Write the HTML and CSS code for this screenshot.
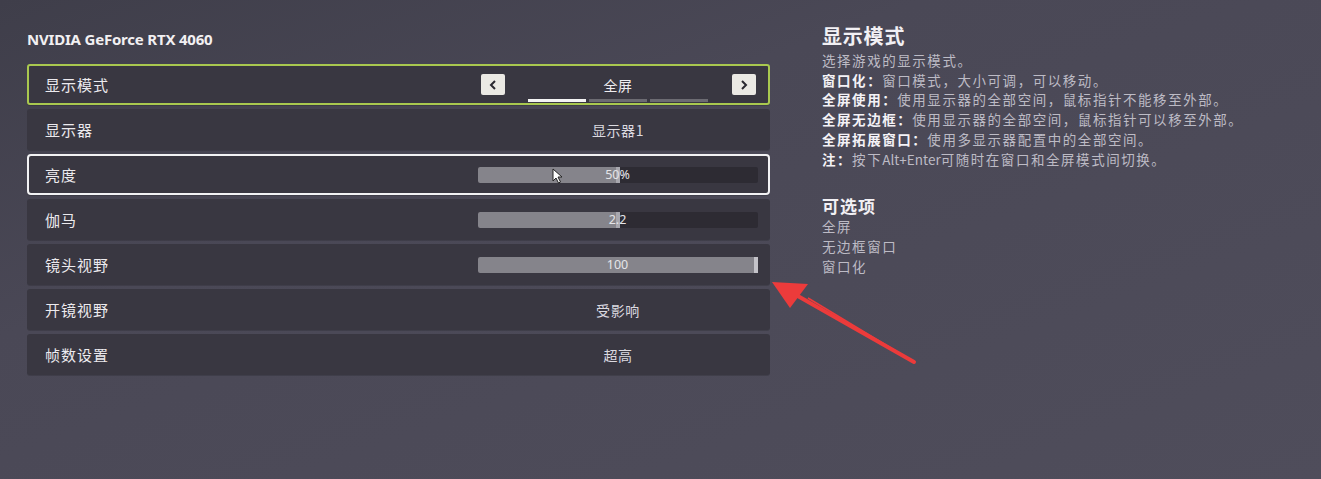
FILE: index.html
```html
<!DOCTYPE html>
<html lang="zh">
<head>
<meta charset="utf-8">
<link rel="stylesheet" href="styles.css">
</head>
<body>
<div class="page">
  <section class="left">
    <h1 class="gpu">NVIDIA GeForce RTX 4060</h1>
    <div class="rows">
      <div class="row row-active">
        <span class="label">显示模式</span>
        <div class="control">
          <div class="picker">
            <span class="btn"><svg width="10" height="12" viewBox="0 0 10 12"><path d="M7 2 L3 6 L7 10" fill="none" stroke="#2a2830" stroke-width="2"/></svg></span>
            <div class="pick-mid">
              <span class="pick-val">全屏</span>
              <div class="segs"><i class="seg on"></i><i class="seg"></i><i class="seg"></i></div>
            </div>
            <span class="btn"><svg width="10" height="12" viewBox="0 0 10 12"><path d="M3 2 L7 6 L3 10" fill="none" stroke="#2a2830" stroke-width="2"/></svg></span>
          </div>
        </div>
      </div>
      <div class="row">
        <span class="label">显示器</span>
        <div class="control"><span class="val">显示器1</span></div>
      </div>
      <div class="row row-focus">
        <span class="label">亮度</span>
        <div class="control">
          <div class="slider"><div class="fill" style="width:50%"></div><span class="knob" style="left:50%"></span><span class="stext">50%</span>
            <svg class="cursor" width="12" height="16" viewBox="0 0 12 16"><path d="M1 1 L1 13 L4 10 L6.5 15 L8.5 14 L6 9 L10 9 Z" fill="#fff" stroke="#222" stroke-width="1"/></svg>
          </div>
        </div>
      </div>
      <div class="row">
        <span class="label">伽马</span>
        <div class="control">
          <div class="slider"><div class="fill" style="width:50%"></div><span class="knob" style="left:50%"></span><span class="stext">2.2</span></div>
        </div>
      </div>
      <div class="row">
        <span class="label">镜头视野</span>
        <div class="control">
          <div class="slider"><div class="fill" style="width:100%"></div><span class="knob end"></span><span class="stext">100</span></div>
        </div>
      </div>
      <div class="row">
        <span class="label">开镜视野</span>
        <div class="control"><span class="val">受影响</span></div>
      </div>
      <div class="row">
        <span class="label">帧数设置</span>
        <div class="control"><span class="val">超高</span></div>
      </div>
    </div>
  </section>
  <aside class="right">
    <h2 class="info-title">显示模式</h2>
    <p class="line">选择游戏的显示模式。</p>
    <p class="line"><b>窗口化：</b>窗口模式，大小可调，可以移动。</p>
    <p class="line"><b>全屏使用：</b>使用显示器的全部空间，鼠标指针不能移至外部。</p>
    <p class="line"><b>全屏无边框：</b>使用显示器的全部空间，鼠标指针可以移至外部。</p>
    <p class="line"><b>全屏拓展窗口：</b>使用多显示器配置中的全部空间。</p>
    <p class="line"><b>注：</b>按下<span class="latin">Alt+Enter</span>可随时在窗口和全屏模式间切换。</p>
    <h3 class="opt-title">可选项</h3>
    <p class="line">全屏</p>
    <p class="line">无边框窗口</p>
    <p class="line">窗口化</p>
  </aside>
  <svg class="arrow" width="160" height="100" viewBox="0 0 160 100">
    <path d="M146 84 L28 17" stroke="#ec3b3b" stroke-width="4" stroke-linecap="round"/>
    <path d="M146 84 L40 20" stroke="#ec3b3b" stroke-width="1.5"/>
    <polygon points="4,4 40,6 22,30" fill="#ec3b3b"/>
  </svg>
</div>
</body>
</html>
```

FILE: styles.css
```css
html, body {
  margin: 0;
  padding: 0;
}
body {
  width: 1321px;
  height: 479px;
  overflow: hidden;
  background: linear-gradient(160deg, #3f3e4a 0%, #4a4856 35%, #4f4d5b 100%);
  font-family: "Noto Sans CJK SC", "Noto Sans", sans-serif;
  color: #e6e4ea;
}
.page {
  position: relative;
  display: flex;
  padding: 0 0 0 27px;
  height: 479px;
}
.left {
  width: 743px;
  flex: none;
}
.gpu {
  margin: 29px 0 0 0;
  height: 35px;
  font-family: "Noto Sans", sans-serif;
  font-weight: 700;
  font-size: 15px;
  line-height: 20px;
  color: #f2f0f2;
  letter-spacing: -0.2px;
}
.rows {
  display: flex;
  flex-direction: column;
  gap: 4px;
}
.row {
  box-sizing: border-box;
  height: 41px;
  background: #393741;
  border-radius: 3px;
  display: flex;
  align-items: center;
  padding-left: 17px;
  border: 1px solid transparent;
  box-shadow: 0 1px 0 rgba(0,0,0,0.15);
}
.row-active {
  border: 2px solid #a9c84f;
  padding-left: 16px;
}
.row-focus {
  border: 2px solid #f2f2f4;
  padding-left: 16px;
  border-radius: 4px;
}
.label {
  font-size: 15px;
  letter-spacing: 1px;
  width: 433px;
  flex: none;
  color: #eceaee;
}
.control {
  width: 280px;
  display: flex;
  justify-content: center;
  align-items: center;
}
.val {
  font-size: 14px;
  letter-spacing: 0.6px;
  color: #dcdae0;
}
.picker {
  width: 280px;
  display: flex;
  align-items: center;
  justify-content: space-between;
  padding: 0 2px 0 3px;
  box-sizing: border-box;
  margin-left: -1px;
}
.btn {
  width: 24px;
  height: 21px;
  background: #ebe9e4;
  border-radius: 2px;
  display: flex;
  align-items: center;
  justify-content: center;
}
.pick-mid {
  display: flex;
  flex-direction: column;
  align-items: center;
  padding-top: 8px;
}
.pick-val {
  font-size: 14px;
  letter-spacing: 0.6px;
  line-height: 18px;
  color: #eeecef;
}
.segs {
  display: flex;
  gap: 3px;
  margin-top: 5px;
}
.seg {
  width: 58px;
  height: 3px;
  background: #6c6b72;
}
.seg.on {
  background: #f4f4f4;
}
.slider {
  position: relative;
  width: 280px;
  height: 16px;
  background: #2d2b33;
  border-radius: 2px;
  margin-left: -1px;
}
.fill {
  height: 100%;
  background: #85848b;
  border-radius: 2px 0 0 2px;
}
.knob {
  position: absolute;
  top: 0;
  width: 4px;
  height: 16px;
  margin-left: -2px;
  background: #a8a7ae;
}
.knob.end {
  right: 0;
  margin-left: 0;
  background: #c4c3c9;
}
.stext {
  position: absolute;
  left: 0;
  right: 0;
  top: 0;
  text-align: center;
  font-family: "Noto Sans", sans-serif;
  font-size: 12.5px;
  line-height: 16px;
  color: #e4e4e8;
}
.cursor {
  position: absolute;
  left: 74px;
  top: 1px;
}
.right {
  margin-left: 52px;
  padding-top: 23px;
  width: 470px;
}
.info-title {
  margin: 0 0 2px 0;
  font-size: 20px;
  letter-spacing: 0.8px;
  line-height: 26px;
  font-weight: 700;
  color: #f2f0f4;
}
.line {
  margin: 0;
  font-size: 13.5px;
  letter-spacing: 1.55px;
  line-height: 19.7px;
  color: #bdbbc5;
  white-space: nowrap;
}
.line b {
  color: #f4f2f6;
  font-weight: 700;
}
.latin {
  letter-spacing: 0;
}
.opt-title {
  margin: 26px 0 0 0;
  font-size: 17px;
  letter-spacing: 1px;
  line-height: 22px;
  font-weight: 700;
  color: #f2f0f4;
}
.arrow {
  position: absolute;
  left: 768px;
  top: 278px;
}
```
